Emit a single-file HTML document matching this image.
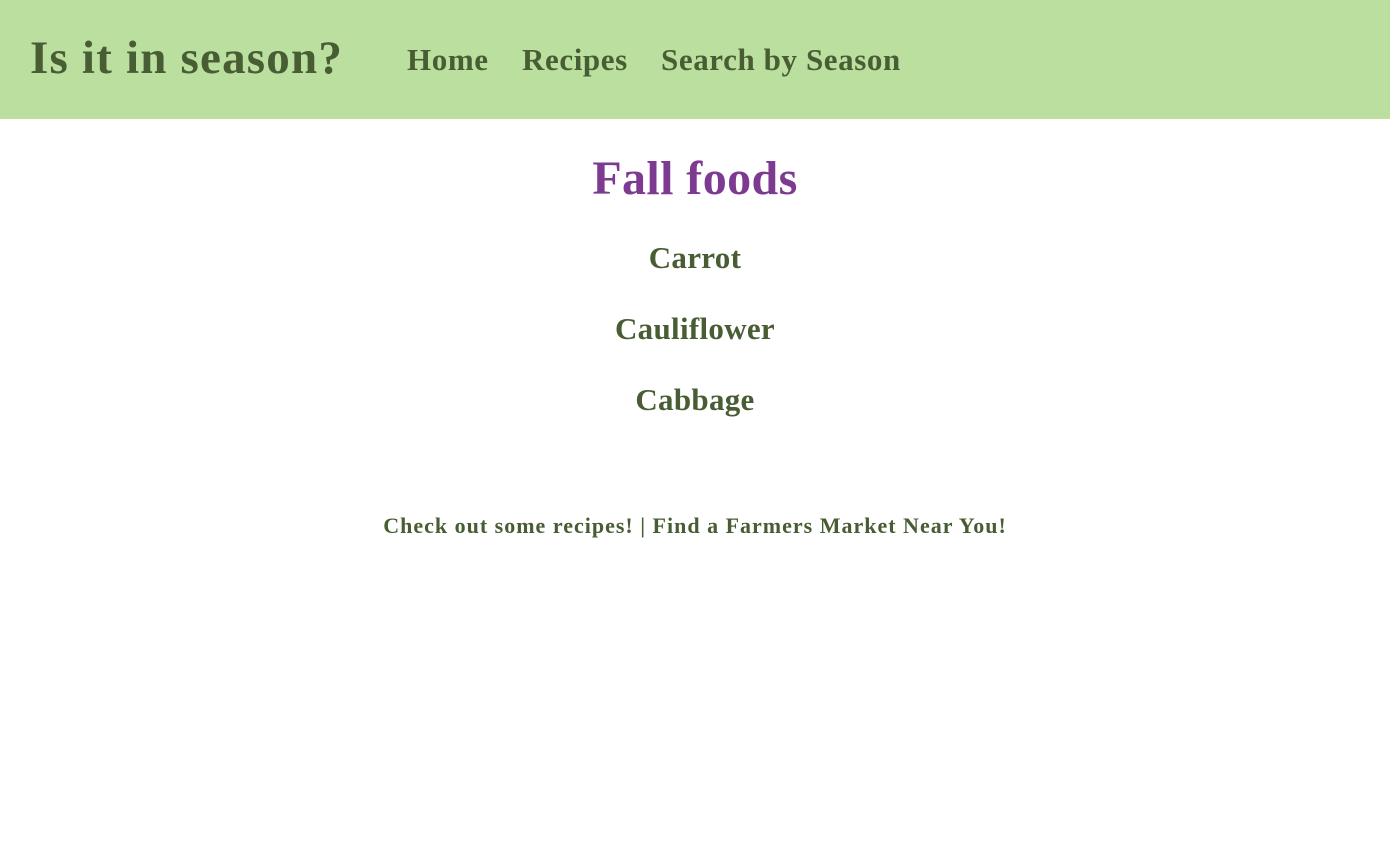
<!DOCTYPE html>
<html><head><style>
body{margin:0;font-family:"Liberation Serif",serif;font-weight:bold;color:#485d33;background:#fff;width:1390px;height:850px;overflow:hidden}
header{background:#bbdf9f;height:119px;position:relative}
.t{position:absolute;left:30px;top:30px;font-size:47px;letter-spacing:1.2px;line-height:56px;white-space:nowrap}
.n{position:absolute;top:40px;font-size:31px;line-height:40px;white-space:nowrap;letter-spacing:0.6px}
h1{color:#7d3a91;font-size:48px;text-align:center;margin:0;position:absolute;top:150px;width:100%;line-height:58px;letter-spacing:0.4px}
.i{position:absolute;width:100%;text-align:center;font-size:31px;line-height:40px;letter-spacing:0.3px}
.f{position:absolute;top:511px;width:100%;text-align:center;font-size:22px;line-height:30px;letter-spacing:1px}
</style></head><body>
<header><div class="t">Is it in season?</div>
<div class="n" style="left:407px">Home</div><div class="n" style="left:522px">Recipes</div><div class="n" style="left:661px">Search by Season</div></header>
<h1>Fall foods</h1>
<div class="i" style="top:238px">Carrot</div>
<div class="i" style="top:309px">Cauliflower</div>
<div class="i" style="top:380px">Cabbage</div>
<div class="f">Check out some recipes! | Find a Farmers Market Near You!</div>
</body></html>
